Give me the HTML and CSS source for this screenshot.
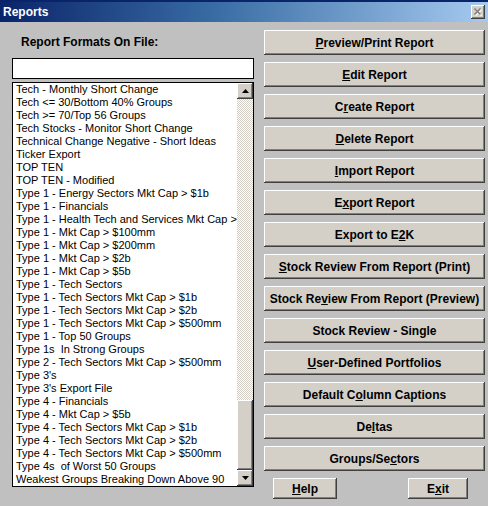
FILE: index.html
```html
<!DOCTYPE html>
<html>
<head>
<meta charset="utf-8">
<title>Reports</title>
<link rel="stylesheet" href="styles.css">
</head>
<body>
<div class="window">
  <div class="titlebar">
    <span class="title">Reports</span>
    <span class="closebtn">
      <svg width="14" height="14" viewBox="0 0 14 14">
        <path d="M4.5 4.5 L10.5 10.5 M10.5 4.5 L4.5 10.5" stroke="#ffffff" stroke-width="1.6" fill="none"/>
        <path d="M3.5 3.5 L9.5 9.5 M9.5 3.5 L3.5 9.5" stroke="#808080" stroke-width="1.6" fill="none"/>
      </svg>
    </span>
  </div>
  <div class="main">
    <div class="left">
      <div class="label">Report Formats On File:</div>
      <div class="input"></div>
      <div class="listbox">
        <div class="items">
          <div class="item">Tech - Monthly Short Change</div>
          <div class="item">Tech &lt;= 30/Bottom 40% Groups</div>
          <div class="item">Tech &gt;= 70/Top 56 Groups</div>
          <div class="item">Tech Stocks - Monitor Short Change</div>
          <div class="item">Technical Change Negative - Short Ideas</div>
          <div class="item">Ticker Export</div>
          <div class="item">TOP TEN</div>
          <div class="item">TOP TEN - Modified</div>
          <div class="item">Type 1 - Energy Sectors Mkt Cap &gt; $1b</div>
          <div class="item">Type 1 - Financials</div>
          <div class="item">Type 1 - Health Tech and Services Mkt Cap &gt;</div>
          <div class="item">Type 1 - Mkt Cap &gt; $100mm</div>
          <div class="item">Type 1 - Mkt Cap &gt; $200mm</div>
          <div class="item">Type 1 - Mkt Cap &gt; $2b</div>
          <div class="item">Type 1 - Mkt Cap &gt; $5b</div>
          <div class="item">Type 1 - Tech Sectors</div>
          <div class="item">Type 1 - Tech Sectors Mkt Cap &gt; $1b</div>
          <div class="item">Type 1 - Tech Sectors Mkt Cap &gt; $2b</div>
          <div class="item">Type 1 - Tech Sectors Mkt Cap &gt; $500mm</div>
          <div class="item">Type 1 - Top 50 Groups</div>
          <div class="item">Type 1s&nbsp; In Strong Groups</div>
          <div class="item">Type 2 - Tech Sectors Mkt Cap &gt; $500mm</div>
          <div class="item">Type 3's</div>
          <div class="item">Type 3's Export File</div>
          <div class="item">Type 4 - Financials</div>
          <div class="item">Type 4 - Mkt Cap &gt; $5b</div>
          <div class="item">Type 4 - Tech Sectors Mkt Cap &gt; $1b</div>
          <div class="item">Type 4 - Tech Sectors Mkt Cap &gt; $2b</div>
          <div class="item">Type 4 - Tech Sectors Mkt Cap &gt; $500mm</div>
          <div class="item">Type 4s&nbsp; of Worst 50 Groups</div>
          <div class="item">Weakest Groups Breaking Down Above 90</div>
        </div>
        <div class="scrollbar">
          <div class="sbtn">
            <svg width="7" height="4" viewBox="0 0 7 4"><path d="M3.5 0 L7 4 L0 4 Z" fill="#000"/></svg>
          </div>
          <div class="track">
            <div class="spacer"></div>
            <div class="thumb"></div>
          </div>
          <div class="sbtn">
            <svg width="7" height="4" viewBox="0 0 7 4"><path d="M0 0 L7 0 L3.5 4 Z" fill="#000"/></svg>
          </div>
        </div>
      </div>
    </div>
    <div class="right">
      <div class="buttons">
        <div class="btn"><u>P</u>review/Print Report</div>
        <div class="btn"><u>E</u>dit Report</div>
        <div class="btn">C<u>r</u>eate Report</div>
        <div class="btn"><u>D</u>elete Report</div>
        <div class="btn"><u>I</u>mport Report</div>
        <div class="btn">E<u>x</u>port Report</div>
        <div class="btn">Export to E<u>2</u>K</div>
        <div class="btn"><u>S</u>tock Review From Report (Print)</div>
        <div class="btn">Stock Re<u>v</u>iew From Report (Preview)</div>
        <div class="btn">Stock Review - Sin<u>g</u>le</div>
        <div class="btn"><u>U</u>ser-Defined Portfolios</div>
        <div class="btn">Default C<u>o</u>lumn Captions</div>
        <div class="btn">De<u>l</u>tas</div>
        <div class="btn">Groups/Se<u>c</u>tors</div>
      </div>
      <div class="footer">
        <div class="btn help"><u>H</u>elp</div>
        <div class="btn exit">E<u>x</u>it</div>
      </div>
    </div>
  </div>
</div>
</body>
</html>
```
FILE: styles.css
```css
html, body {
  margin: 0;
  padding: 0;
}
body {
  width: 488px;
  height: 506px;
  overflow: hidden;
  background: #c0c0c0;
  font-family: "Liberation Sans", Arial, sans-serif;
  color: #000;
}
.window {
  width: 488px;
  height: 506px;
  background: #c0c0c0;
}
.titlebar {
  height: 20px;
  border-top: 2px solid #0a246a;
  background: linear-gradient(to right, #0a246a 0%, #3a6ea5 45%, #a6caf0 100%);
  display: flex;
  align-items: center;
  justify-content: space-between;
  padding: 0 3px 0 3px;
}
.title {
  color: #fff;
  font-weight: bold;
  font-size: 12px;
}
.closebtn {
  width: 14px;
  height: 14px;
  background: #d4d0c8;
  box-shadow: inset -1px -1px #404040, inset 1px 1px #fff, inset -2px -2px #808080;
  display: block;
}
.closebtn svg {
  display: block;
}
.main {
  display: flex;
  padding: 8px 0 0 12px;
  gap: 10px;
}
.left {
  width: 242px;
  display: flex;
  flex-direction: column;
}
.label {
  height: 28px;
  line-height: 24px;
  padding-left: 9px;
  font-weight: bold;
  font-size: 12px;
}
.input {
  height: 19px;
  border: 1px solid #000;
  background: #fff;
  margin-bottom: 3px;
}
.listbox {
  height: 403px;
  border: 1px solid #000;
  background: #fff;
  display: flex;
}
.items {
  flex: 1;
  overflow: hidden;
  padding-left: 3px;
}
.item {
  height: 13px;
  line-height: 13px;
  font-size: 11px;
  white-space: nowrap;
}
.scrollbar {
  width: 16px;
  display: flex;
  flex-direction: column;
}
.sbtn {
  width: 16px;
  height: 16px;
  background: #d4d0c8;
  box-shadow: inset -1px -1px #404040, inset 1px 1px #fff, inset -2px -2px #808080;
  display: flex;
  align-items: center;
  justify-content: center;
}
.sbtn svg {
  display: block;
}
.track {
  flex: 1;
  display: flex;
  flex-direction: column;
  background: repeating-conic-gradient(#ffffff 0 25%, #d4d0c8 0 50%) 0 0 / 2px 2px;
}
.spacer {
  flex: 1;
}
.thumb {
  height: 70px;
  background: #d4d0c8;
  box-shadow: inset -1px -1px #404040, inset 1px 1px #fff, inset -2px -2px #808080;
}
.right {
  width: 221px;
  display: flex;
  flex-direction: column;
}
.buttons {
  display: flex;
  flex-direction: column;
  gap: 7px;
}
.btn {
  height: 25px;
  background: #d4d0c8;
  box-shadow: inset -1px -1px #404040, inset 1px 1px #fff, inset -2px -2px #808080;
  display: flex;
  align-items: center;
  justify-content: center;
  font-weight: bold;
  font-size: 12px;
  white-space: nowrap;
}
.btn u {
  text-underline-offset: 1px;
}
.footer {
  display: flex;
  justify-content: space-between;
  margin-top: 7px;
  padding: 0 17px 0 9px;
}
.help {
  width: 64px;
  height: 21px;
}
.exit {
  width: 60px;
  height: 21px;
}
```
